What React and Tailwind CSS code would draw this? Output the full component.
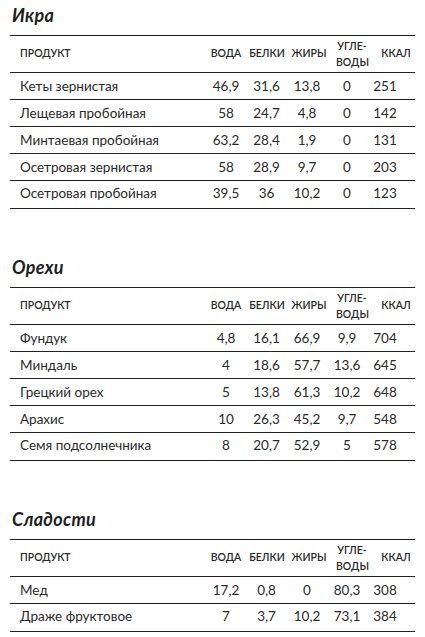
import React from 'react';

const sections = [
    {
        title: 'Икра',
        rows: [
            ['Кеты зернистая', '46,9', '31,6', '13,8', '0', '251'],
            ['Лещевая пробойная', '58', '24,7', '4,8', '0', '142'],
            ['Минтаевая пробойная', '63,2', '28,4', '1,9', '0', '131'],
            ['Осетровая зернистая', '58', '28,9', '9,7', '0', '203'],
            ['Осетровая пробойная', '39,5', '36', '10,2', '0', '123'],
        ],
    },
    {
        title: 'Орехи',
        rows: [
            ['Фундук', '4,8', '16,1', '66,9', '9,9', '704'],
            ['Миндаль', '4', '18,6', '57,7', '13,6', '645'],
            ['Грецкий орех', '5', '13,8', '61,3', '10,2', '648'],
            ['Арахис', '10', '26,3', '45,2', '9,7', '548'],
            ['Семя подсолнечника', '8', '20,7', '52,9', '5', '578'],
        ],
    },
    {
        title: 'Сладости',
        rows: [
            ['Мед', '17,2', '0,8', '0', '80,3', '308'],
            ['Драже фруктовое', '7', '3,7', '10,2', '73,1', '384'],
        ],
    },
];

const Section = ({ title, rows, first }) => (
    <section className={first ? '' : 'mt-[48px]'}>
        {/* Title */}
        <h2 className="h-[20px] pl-[2px] text-[18px] leading-[20px] font-bold italic tracking-[0.3px] text-[#1e1e1e]">
            {title}
        </h2>

        <div className="mt-[10px] border-t border-[#222]">
            {/* Header */}
            <div className="flex h-[37px] items-center border-b border-[#222] text-[10.5px] font-semibold uppercase text-[#2a2a2a]">
                <div className="flex-1 pl-[10px]">Продукт</div>
                <div className="w-[44px] text-center">Вода</div>
                <div className="w-[40px] pr-[2px] text-center">Белки</div>
                <div className="w-[40px] pl-[2px] text-center">Жиры</div>
                <div className="w-[40px] pl-[8px] text-center leading-[16px]">
                    Угле-
                    <br />
                    воды
                </div>
                <div className="w-[47px] pl-[9px] text-center">Ккал</div>
            </div>

            {/* Rows */}
            {rows.map((r, i) => (
                <div
                    key={r[0]}
                    className={`flex items-center border-b border-[#222] text-[13.5px] text-[#2a2a2a] ${
                        i === rows.length - 1 ? 'h-[28px] pb-[2px]' : 'h-[27px]'
                    }`}
                >
                    <div className="flex-1 pl-[10px]">{r[0]}</div>
                    <div className="w-[44px] text-center">{r[1]}</div>
                    <div className="w-[40px] pr-[3px] text-center">{r[2]}</div>
                    <div className="w-[40px] pr-[2px] text-center">{r[3]}</div>
                    <div className="w-[40px] pr-[2px] text-center">{r[4]}</div>
                    <div className="w-[47px] pr-[13px] text-center">{r[5]}</div>
                </div>
            ))}
        </div>
    </section>
);

const App = () => {
    return (
        <div className="h-[637px] w-[425px] overflow-hidden bg-white px-[10px] pt-[5px] font-['Lato','Open_Sans',sans-serif]">
            {sections.map((s, i) => (
                <Section key={s.title} title={s.title} rows={s.rows} first={i === 0} />
            ))}
        </div>
    );
};

export default App;
